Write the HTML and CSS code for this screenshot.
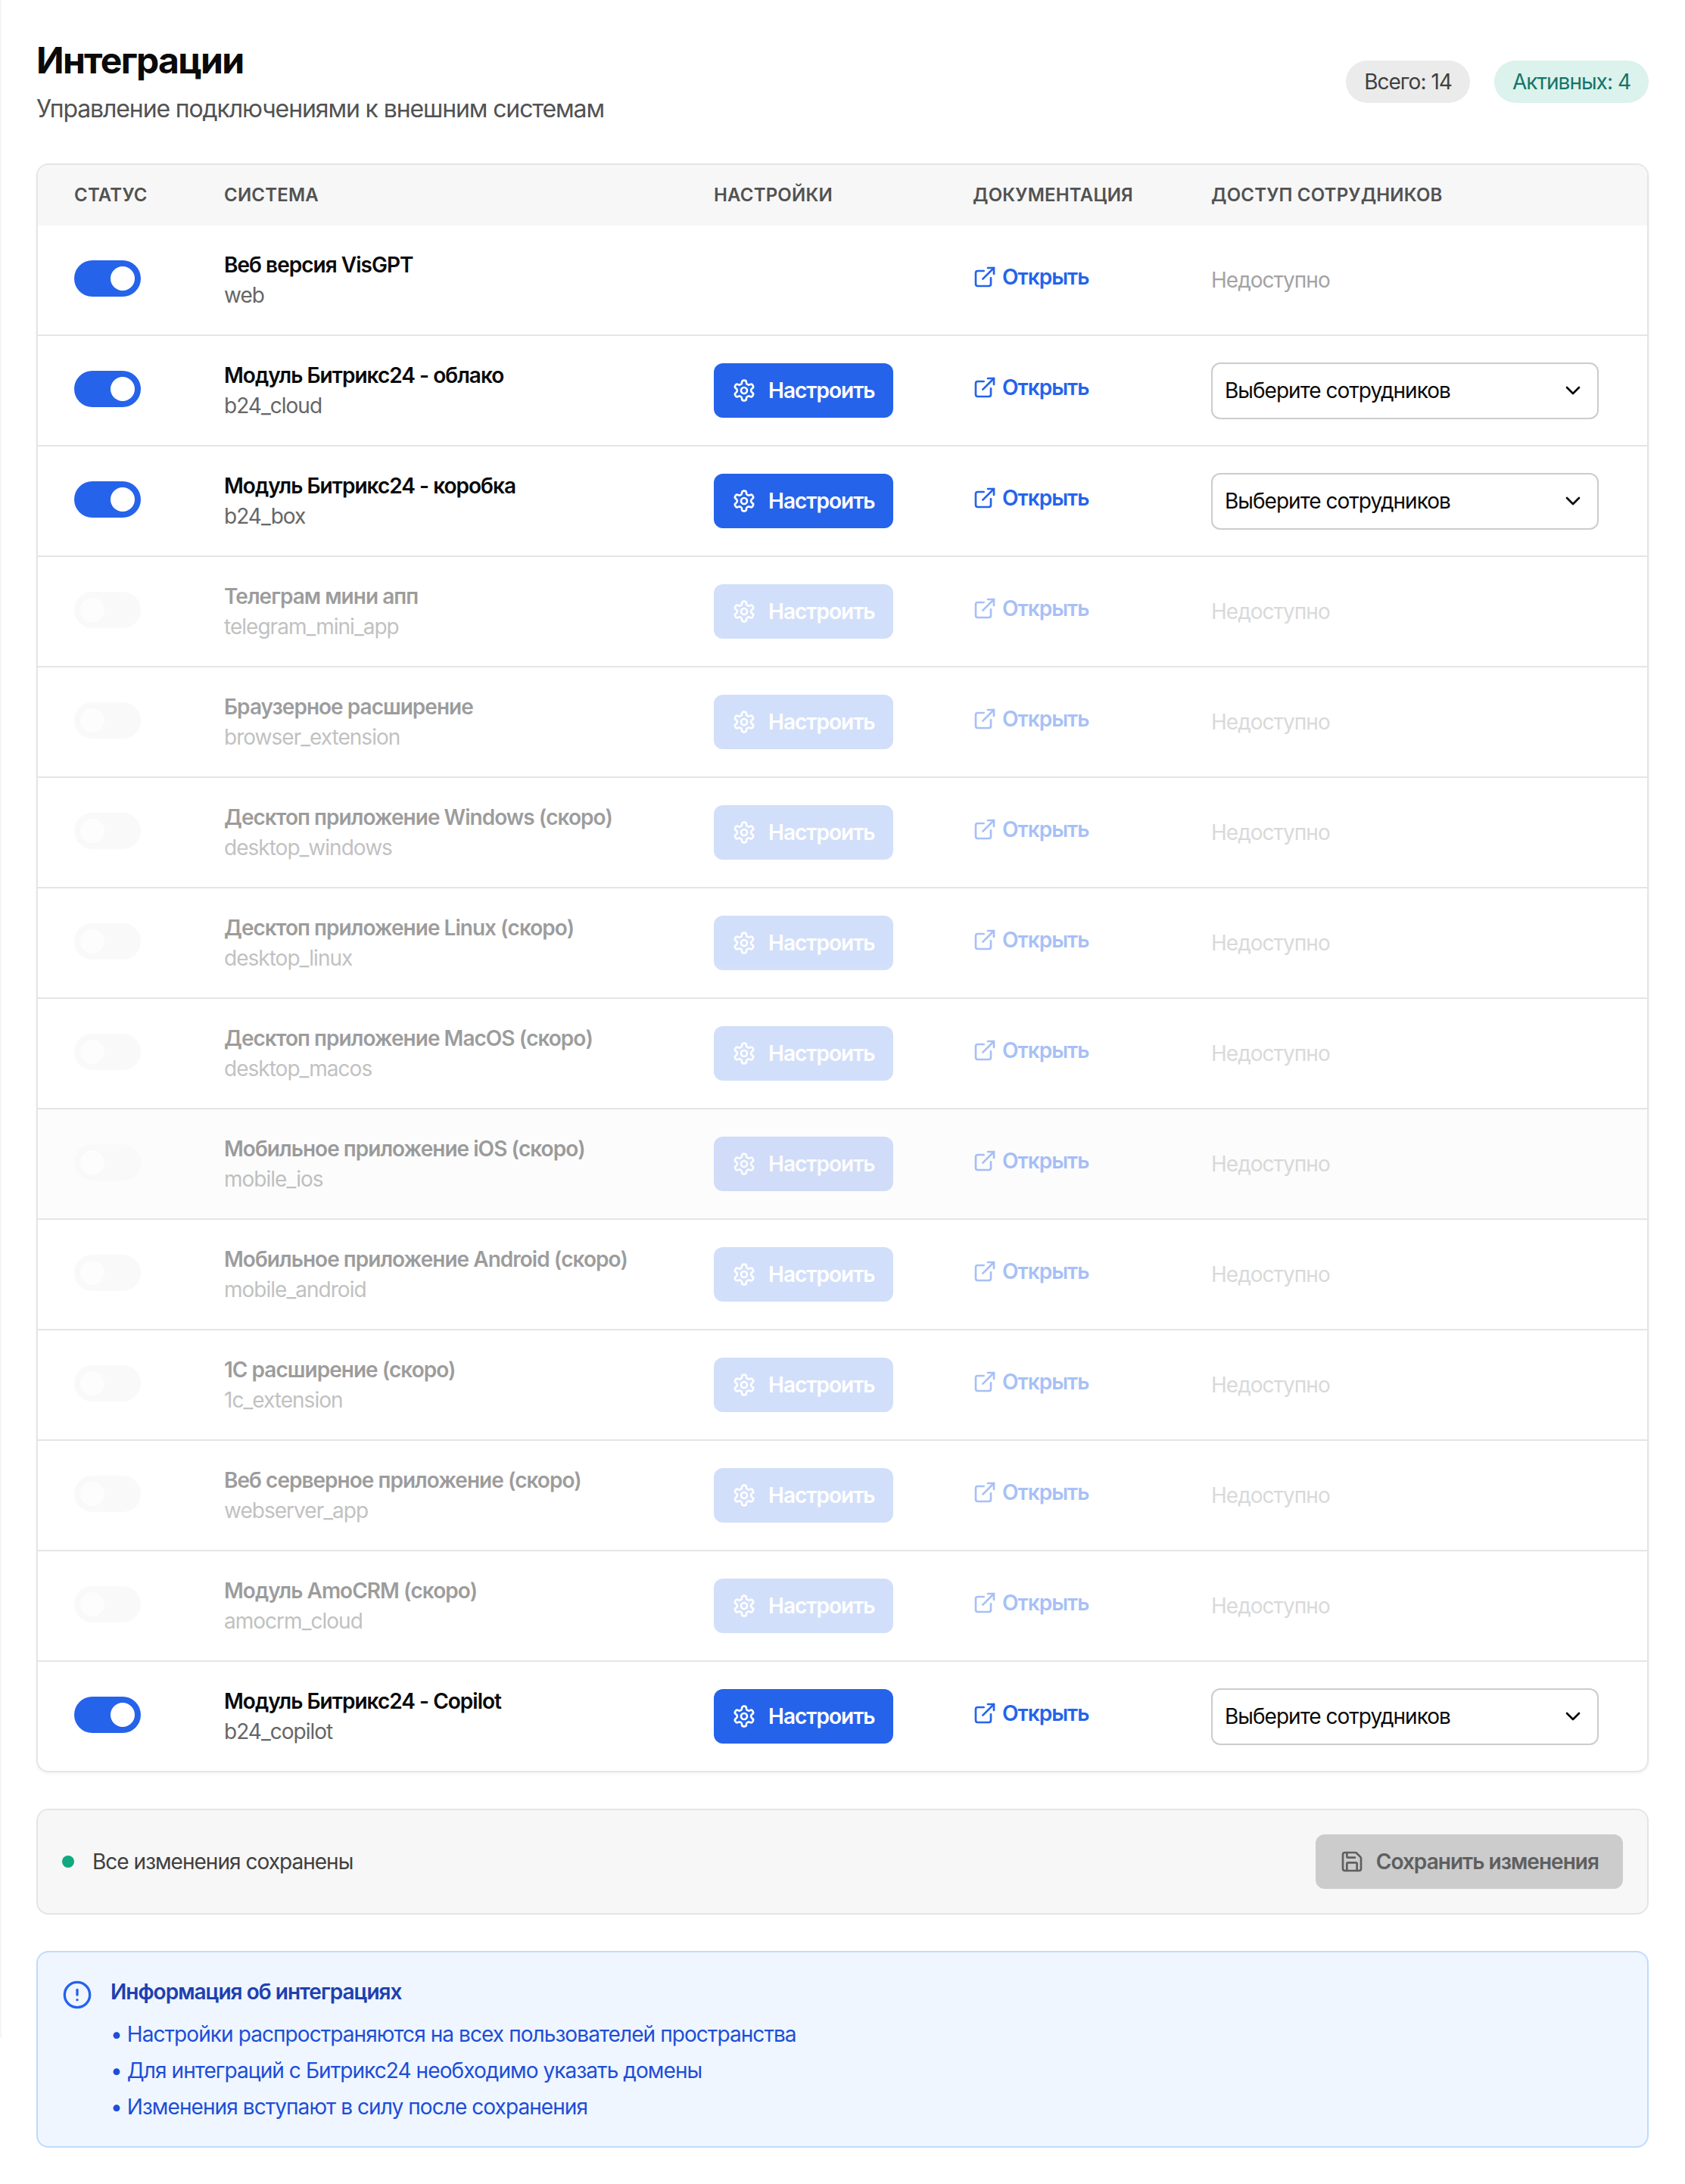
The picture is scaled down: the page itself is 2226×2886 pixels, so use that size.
FILE: index.html
```html
<!DOCTYPE html>
<html lang="ru">
<head>
    <meta charset="UTF-8">
    <meta name="viewport" content="width=device-width, initial-scale=1.0">
    <title>Интеграции</title>
    <link rel="stylesheet" href="styles.css">
</head>
<body>
    <svg class="sprite" xmlns="http://www.w3.org/2000/svg">
        <symbol id="i-gear" viewBox="0 0 24 24">
            <path d="M12.22 2h-.44a2 2 0 0 0-2 2v.18a2 2 0 0 1-1 1.73l-.43.25a2 2 0 0 1-2 0l-.15-.08a2 2 0 0 0-2.73.73l-.22.38a2 2 0 0 0 .73 2.73l.15.1a2 2 0 0 1 1 1.72v.51a2 2 0 0 1-1 1.74l-.15.09a2 2 0 0 0-.73 2.73l.22.38a2 2 0 0 0 2.73.73l.15-.08a2 2 0 0 1 2 0l.43.25a2 2 0 0 1 1 1.73V20a2 2 0 0 0 2 2h.44a2 2 0 0 0 2-2v-.18a2 2 0 0 1 1-1.73l.43-.25a2 2 0 0 1 2 0l.15.08a2 2 0 0 0 2.73-.73l.22-.39a2 2 0 0 0-.73-2.73l-.15-.08a2 2 0 0 1-1-1.74v-.5a2 2 0 0 1 1-1.74l.15-.09a2 2 0 0 0 .73-2.73l-.22-.38a2 2 0 0 0-2.73-.73l-.15.08a2 2 0 0 1-2 0l-.43-.25a2 2 0 0 1-1-1.73V4a2 2 0 0 0-2-2z"/>
            <circle cx="12" cy="12" r="3"/>
        </symbol>
        <symbol id="i-link" viewBox="0 0 24 24">
            <path d="M15 3h6v6"/>
            <path d="M10 14 21 3"/>
            <path d="M18 13v6a2 2 0 0 1-2 2H5a2 2 0 0 1-2-2V8a2 2 0 0 1 2-2h6"/>
        </symbol>
        <symbol id="i-chevron" viewBox="0 0 24 24">
            <path d="m6 9 6 6 6-6"/>
        </symbol>
        <symbol id="i-save" viewBox="0 0 24 24">
            <path d="M15.2 3a2 2 0 0 1 1.4.6l3.8 3.8a2 2 0 0 1 .6 1.4V19a2 2 0 0 1-2 2H5a2 2 0 0 1-2-2V5a2 2 0 0 1 2-2z"/>
            <path d="M17 21v-7a1 1 0 0 0-1-1H8a1 1 0 0 0-1 1v7"/>
            <path d="M7 3v4a1 1 0 0 0 1 1h7"/>
        </symbol>
        <symbol id="i-alert" viewBox="0 0 24 24">
            <circle cx="12" cy="12" r="10"/>
            <path d="M12 8v4"/>
            <path d="M12 16h.01"/>
        </symbol>
    </svg>

    <div class="page">
        <div class="page-head">
            <div>
                <h1>Интеграции</h1>
                <p class="subtitle">Управление подключениями к внешним системам</p>
            </div>
            <div class="badges">
                <span class="badge">Всего: 14</span>
                <span class="badge badge-active">Активных: 4</span>
            </div>
        </div>

        <div class="table-wrap">
            <table>
                <colgroup>
                    <col class="col-status">
                    <col class="col-system">
                    <col class="col-settings">
                    <col class="col-docs">
                    <col class="col-access">
                </colgroup>
                <thead>
                    <tr>
                        <th>Статус</th>
                        <th>Система</th>
                        <th>Настройки</th>
                        <th>Документация</th>
                        <th>Доступ сотрудников</th>
                    </tr>
                </thead>
                <tbody>
                    <tr>
                        <td><span class="toggle on"><span class="thumb"></span></span></td>
                        <td><div class="name">Веб версия VisGPT</div><div class="code">web</div></td>
                        <td></td>
                        <td><a class="doc-link" href="#"><svg class="icon"><use href="#i-link"/></svg>Открыть</a></td>
                        <td><span class="na">Недоступно</span></td>
                    </tr>
                    <tr>
                        <td><span class="toggle on"><span class="thumb"></span></span></td>
                        <td><div class="name">Модуль Битрикс24 - облако</div><div class="code">b24_cloud</div></td>
                        <td><button class="btn"><svg class="icon"><use href="#i-gear"/></svg>Настроить</button></td>
                        <td><a class="doc-link" href="#"><svg class="icon"><use href="#i-link"/></svg>Открыть</a></td>
                        <td><div class="picker">Выберите сотрудников<svg class="icon"><use href="#i-chevron"/></svg></div></td>
                    </tr>
                    <tr>
                        <td><span class="toggle on"><span class="thumb"></span></span></td>
                        <td><div class="name">Модуль Битрикс24 - коробка</div><div class="code">b24_box</div></td>
                        <td><button class="btn"><svg class="icon"><use href="#i-gear"/></svg>Настроить</button></td>
                        <td><a class="doc-link" href="#"><svg class="icon"><use href="#i-link"/></svg>Открыть</a></td>
                        <td><div class="picker">Выберите сотрудников<svg class="icon"><use href="#i-chevron"/></svg></div></td>
                    </tr>
                    <tr class="off">
                        <td><span class="toggle"><span class="thumb"></span></span></td>
                        <td><div class="name">Телеграм мини апп</div><div class="code">telegram_mini_app</div></td>
                        <td><button class="btn"><svg class="icon"><use href="#i-gear"/></svg>Настроить</button></td>
                        <td><a class="doc-link" href="#"><svg class="icon"><use href="#i-link"/></svg>Открыть</a></td>
                        <td><span class="na">Недоступно</span></td>
                    </tr>
                    <tr class="off">
                        <td><span class="toggle"><span class="thumb"></span></span></td>
                        <td><div class="name">Браузерное расширение</div><div class="code">browser_extension</div></td>
                        <td><button class="btn"><svg class="icon"><use href="#i-gear"/></svg>Настроить</button></td>
                        <td><a class="doc-link" href="#"><svg class="icon"><use href="#i-link"/></svg>Открыть</a></td>
                        <td><span class="na">Недоступно</span></td>
                    </tr>
                    <tr class="off">
                        <td><span class="toggle"><span class="thumb"></span></span></td>
                        <td><div class="name">Десктоп приложение Windows (скоро)</div><div class="code">desktop_windows</div></td>
                        <td><button class="btn"><svg class="icon"><use href="#i-gear"/></svg>Настроить</button></td>
                        <td><a class="doc-link" href="#"><svg class="icon"><use href="#i-link"/></svg>Открыть</a></td>
                        <td><span class="na">Недоступно</span></td>
                    </tr>
                    <tr class="off">
                        <td><span class="toggle"><span class="thumb"></span></span></td>
                        <td><div class="name">Десктоп приложение Linux (скоро)</div><div class="code">desktop_linux</div></td>
                        <td><button class="btn"><svg class="icon"><use href="#i-gear"/></svg>Настроить</button></td>
                        <td><a class="doc-link" href="#"><svg class="icon"><use href="#i-link"/></svg>Открыть</a></td>
                        <td><span class="na">Недоступно</span></td>
                    </tr>
                    <tr class="off">
                        <td><span class="toggle"><span class="thumb"></span></span></td>
                        <td><div class="name">Десктоп приложение MacOS (скоро)</div><div class="code">desktop_macos</div></td>
                        <td><button class="btn"><svg class="icon"><use href="#i-gear"/></svg>Настроить</button></td>
                        <td><a class="doc-link" href="#"><svg class="icon"><use href="#i-link"/></svg>Открыть</a></td>
                        <td><span class="na">Недоступно</span></td>
                    </tr>
                    <tr class="off hovered">
                        <td><span class="toggle"><span class="thumb"></span></span></td>
                        <td><div class="name">Мобильное приложение iOS (скоро)</div><div class="code">mobile_ios</div></td>
                        <td><button class="btn"><svg class="icon"><use href="#i-gear"/></svg>Настроить</button></td>
                        <td><a class="doc-link" href="#"><svg class="icon"><use href="#i-link"/></svg>Открыть</a></td>
                        <td><span class="na">Недоступно</span></td>
                    </tr>
                    <tr class="off">
                        <td><span class="toggle"><span class="thumb"></span></span></td>
                        <td><div class="name">Мобильное приложение Android (скоро)</div><div class="code">mobile_android</div></td>
                        <td><button class="btn"><svg class="icon"><use href="#i-gear"/></svg>Настроить</button></td>
                        <td><a class="doc-link" href="#"><svg class="icon"><use href="#i-link"/></svg>Открыть</a></td>
                        <td><span class="na">Недоступно</span></td>
                    </tr>
                    <tr class="off">
                        <td><span class="toggle"><span class="thumb"></span></span></td>
                        <td><div class="name">1С расширение (скоро)</div><div class="code">1c_extension</div></td>
                        <td><button class="btn"><svg class="icon"><use href="#i-gear"/></svg>Настроить</button></td>
                        <td><a class="doc-link" href="#"><svg class="icon"><use href="#i-link"/></svg>Открыть</a></td>
                        <td><span class="na">Недоступно</span></td>
                    </tr>
                    <tr class="off">
                        <td><span class="toggle"><span class="thumb"></span></span></td>
                        <td><div class="name">Веб серверное приложение (скоро)</div><div class="code">webserver_app</div></td>
                        <td><button class="btn"><svg class="icon"><use href="#i-gear"/></svg>Настроить</button></td>
                        <td><a class="doc-link" href="#"><svg class="icon"><use href="#i-link"/></svg>Открыть</a></td>
                        <td><span class="na">Недоступно</span></td>
                    </tr>
                    <tr class="off">
                        <td><span class="toggle"><span class="thumb"></span></span></td>
                        <td><div class="name">Модуль AmoCRM (скоро)</div><div class="code">amocrm_cloud</div></td>
                        <td><button class="btn"><svg class="icon"><use href="#i-gear"/></svg>Настроить</button></td>
                        <td><a class="doc-link" href="#"><svg class="icon"><use href="#i-link"/></svg>Открыть</a></td>
                        <td><span class="na">Недоступно</span></td>
                    </tr>
                    <tr>
                        <td><span class="toggle on"><span class="thumb"></span></span></td>
                        <td><div class="name">Модуль Битрикс24 - Copilot</div><div class="code">b24_copilot</div></td>
                        <td><button class="btn"><svg class="icon"><use href="#i-gear"/></svg>Настроить</button></td>
                        <td><a class="doc-link" href="#"><svg class="icon"><use href="#i-link"/></svg>Открыть</a></td>
                        <td><div class="picker">Выберите сотрудников<svg class="icon"><use href="#i-chevron"/></svg></div></td>
                    </tr>
                </tbody>
            </table>
        </div>

        <div class="save-bar">
            <div class="save-status"><span class="dot"></span>Все изменения сохранены</div>
            <button class="btn-save"><svg class="icon"><use href="#i-save"/></svg>Сохранить изменения</button>
        </div>

        <div class="info">
            <svg class="icon info-icon"><use href="#i-alert"/></svg>
            <div>
                <div class="info-title">Информация об интеграциях</div>
                <ul class="info-list">
                    <li>• Настройки распространяются на всех пользователей пространства</li>
                    <li>• Для интеграций с Битрикс24 необходимо указать домены</li>
                    <li>• Изменения вступают в силу после сохранения</li>
                </ul>
            </div>
        </div>
    </div>
</body>
</html>
```
FILE: styles.css
```css
* {
    box-sizing: border-box;
    letter-spacing: -0.035em;
}
body {
    margin: 0;
    background-color: #fff;
    color: #0a0a0a;
    font-family: Inter, "Noto Sans", sans-serif;
    font-size: 28px;
    line-height: 40px;
}
/* faint edge of the sidebar */
body::before {
    content: "";
    position: absolute;
    left: 0;
    top: 0;
    width: 2px;
    height: 2693px;
    background-color: #f5f5f5;
}
.sprite {
    display: none;
}
.icon {
    width: 32px;
    height: 32px;
    flex-shrink: 0;
    fill: none;
    stroke: currentColor;
    stroke-width: 2;
    stroke-linecap: round;
    stroke-linejoin: round;
}
.page {
    padding: 48px;
}
.page-head {
    display: flex;
    justify-content: space-between;
    align-items: center;
    margin-bottom: 48px;
}
h1 {
    margin: 0 0 8px;
    font-size: 48px;
    line-height: 64px;
    font-weight: 700;
}
.subtitle {
    margin: 0;
    font-size: 32px;
    line-height: 48px;
    color: #525252;
}
.badges {
    display: flex;
    gap: 32px;
}
.badge {
    padding: 8px 24px;
    border-radius: 28px;
    background-color: #ebebeb;
    color: #404040;
}
.badge-active {
    background-color: #dcf2ec;
    color: #13756a;
}
.table-wrap {
    border: 2px solid #e5e5e5;
    border-radius: 16px;
    overflow: hidden;
    box-shadow: 0 2px 4px rgba(0, 0, 0, 0.05);
}
table {
    width: 100%;
    table-layout: fixed;
    border-collapse: separate;
    border-spacing: 0;
}
.col-status { width: 198px; }
.col-system { width: 647px; }
.col-settings { width: 342px; }
.col-docs { width: 315px; }
th {
    padding: 24px 0 24px 48px;
    background-color: #f7f7f7;
    color: #525252;
    font-size: 24px;
    line-height: 32px;
    font-weight: 600;
    letter-spacing: 0.008em;
    text-align: left;
    text-transform: uppercase;
}
td {
    height: 146px;
    padding: 0 0 0 48px;
    border-bottom: 2px solid #e5e5e5;
    vertical-align: middle;
}
tbody tr:last-child td {
    height: 144px;
    border-bottom: none;
}
.toggle {
    display: flex;
    justify-content: flex-start;
    width: 88px;
    height: 48px;
    margin-bottom: 4px;
    padding: 8px;
    border-radius: 24px;
    background-color: #f9f9f9;
}
.toggle .thumb {
    width: 32px;
    height: 32px;
    border-radius: 50%;
    background-color: #fdfdfd;
}
.toggle.on {
    justify-content: flex-end;
    background-color: #2563eb;
}
.toggle.on .thumb {
    background-color: #fff;
}
.name {
    font-weight: 600;
}
.code {
    color: #666;
}
.btn {
    display: flex;
    align-items: center;
    gap: 16px;
    height: 72px;
    padding: 0 24px;
    border: none;
    border-radius: 12px;
    background-color: #2563eb;
    color: #fff;
    font: inherit;
    font-weight: 600;
    cursor: pointer;
}
.doc-link {
    display: inline-flex;
    align-items: center;
    gap: 7px;
    margin-bottom: 8px;
    color: #2563eb;
    font-weight: 600;
    text-decoration: none;
}
.na {
    color: #a3a3a3;
}
.picker {
    display: flex;
    justify-content: space-between;
    align-items: center;
    width: 512px;
    height: 75px;
    padding: 0 16px;
    border: 2px solid #ccc;
    border-radius: 12px;
    background-color: #fff;
}
.off .name,
.off .code,
.off .doc-link,
.off .na {
    opacity: 0.4;
}
.off .btn {
    opacity: 0.2;
}
.off.hovered td {
    background-color: #fcfcfc;
}
.save-bar {
    display: flex;
    justify-content: space-between;
    align-items: center;
    margin-top: 48px;
    padding: 32px;
    border: 2px solid #e5e5e5;
    border-radius: 16px;
    background-color: #f7f7f7;
}
.save-status {
    display: flex;
    align-items: center;
    gap: 24px;
    color: #404040;
}
.dot {
    width: 16px;
    height: 16px;
    border-radius: 50%;
    background-color: #10a97f;
}
.btn-save {
    display: flex;
    align-items: center;
    gap: 16px;
    height: 72px;
    padding: 0 32px;
    border: none;
    border-radius: 12px;
    background-color: #ccc;
    color: #5f5f5f;
    font: inherit;
    font-weight: 600;
}
.info {
    display: flex;
    gap: 24px;
    margin-top: 48px;
    padding: 32px;
    border: 2px solid #bfdbfe;
    border-radius: 16px;
    background-color: #eff6ff;
}
.info-icon {
    width: 40px;
    height: 40px;
    margin-top: 4px;
    color: #2563eb;
}
.info-title {
    margin-bottom: 16px;
    color: #1e40af;
    font-weight: 600;
}
.info-list {
    display: flex;
    flex-direction: column;
    gap: 8px;
    margin: 0;
    padding: 0;
    color: #1d4ed8;
    list-style: none;
}
.info-list li {
    letter-spacing: -0.033em;
}
```
